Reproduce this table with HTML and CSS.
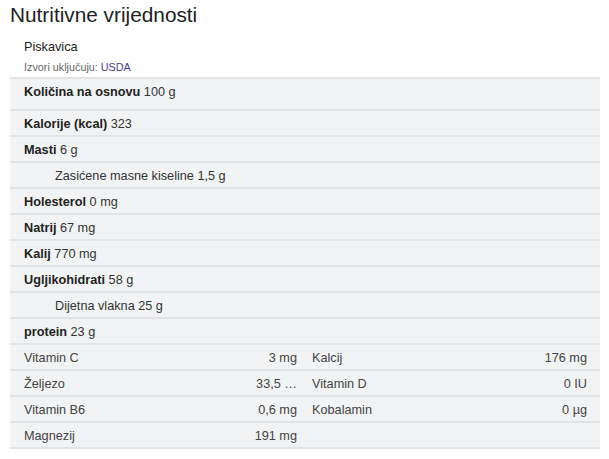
FILE: index.html
```html
<!DOCTYPE html>
<html>
<head>
<meta charset="utf-8">
<link rel="stylesheet" href="styles.css">
</head>
<body>
<h1 class="title">Nutritivne vrijednosti</h1>
<div class="head">
  <div class="food">Piskavica</div>
  <div class="source">Izvori uključuju: <a class="usda">USDA</a></div>
</div>
<div class="table">
  <div class="row first"><b>Količina na osnovu</b> 100 g</div>
  <div class="row"><b>Kalorije (kcal)</b> 323</div>
  <div class="row"><b>Masti</b> 6 g</div>
  <div class="row sub">Zasićene masne kiseline 1,5 g</div>
  <div class="row"><b>Holesterol</b> 0 mg</div>
  <div class="row"><b>Natrij</b> 67 mg</div>
  <div class="row"><b>Kalij</b> 770 mg</div>
  <div class="row"><b>Ugljikohidrati</b> 58 g</div>
  <div class="row sub">Dijetna vlakna 25 g</div>
  <div class="row"><b>protein</b> 23 g</div>
  <div class="grid">
    <div class="cell"><span class="lbl">Vitamin C</span><span class="val">3 mg</span></div>
    <div class="cell"><span class="lbl">Kalcij</span><span class="val">176 mg</span></div>
    <div class="cell"><span class="lbl">Željezo</span><span class="val">33,5 …</span></div>
    <div class="cell"><span class="lbl">Vitamin D</span><span class="val">0 IU</span></div>
    <div class="cell"><span class="lbl">Vitamin B6</span><span class="val">0,6 mg</span></div>
    <div class="cell"><span class="lbl">Kobalamin</span><span class="val">0 µg</span></div>
    <div class="cell"><span class="lbl">Magnezij</span><span class="val">191 mg</span></div>
    <div class="cell"></div>
  </div>
</div>
</body>
</html>
```
FILE: styles.css
```css
body {
  margin: 0;
  padding: 0 9px 0 10px;
  font-family: "Liberation Sans", Arial, sans-serif;
  color: #222;
  background: #fff;
}
.title {
  margin: 0;
  padding-top: 2px;
  font-size: 20.8px;
  font-weight: normal;
  line-height: 26px;
  color: #222;
}
.head {
  padding: 11px 0 0 14px;
  height: 49px;
  box-sizing: border-box;
}
.food {
  font-size: 12.7px;
  line-height: 16px;
  color: #222;
}
.source {
  margin-top: 5px;
  font-size: 10.8px;
  line-height: 14px;
  color: #666;
}
.usda {
  color: #4b3e98;
}
.table {
  background: #f1f3f4;
  border-top: 2px solid #e1e3e6;
}
.row {
  height: 26px;
  box-sizing: border-box;
  border-bottom: 2px solid #e1e3e6;
  padding: 5px 0 0 14px;
  font-size: 12.7px;
  line-height: 17px;
  color: #333;
}
.row b {
  color: #222;
}
.row.first {
  height: 32px;
  padding-top: 5px;
}
.row.sub {
  padding-left: 45px;
}
.grid {
  display: grid;
  grid-template-columns: 295px 295px;
}
.cell {
  height: 26px;
  box-sizing: border-box;
  border-bottom: 2px solid #e1e3e6;
  padding: 5px 8px 0 14px;
  display: flex;
  justify-content: space-between;
  font-size: 12.7px;
  line-height: 17px;
  color: #444;
}
.cell:nth-child(2n) {
  padding-left: 7px;
  padding-right: 13px;
}
```
